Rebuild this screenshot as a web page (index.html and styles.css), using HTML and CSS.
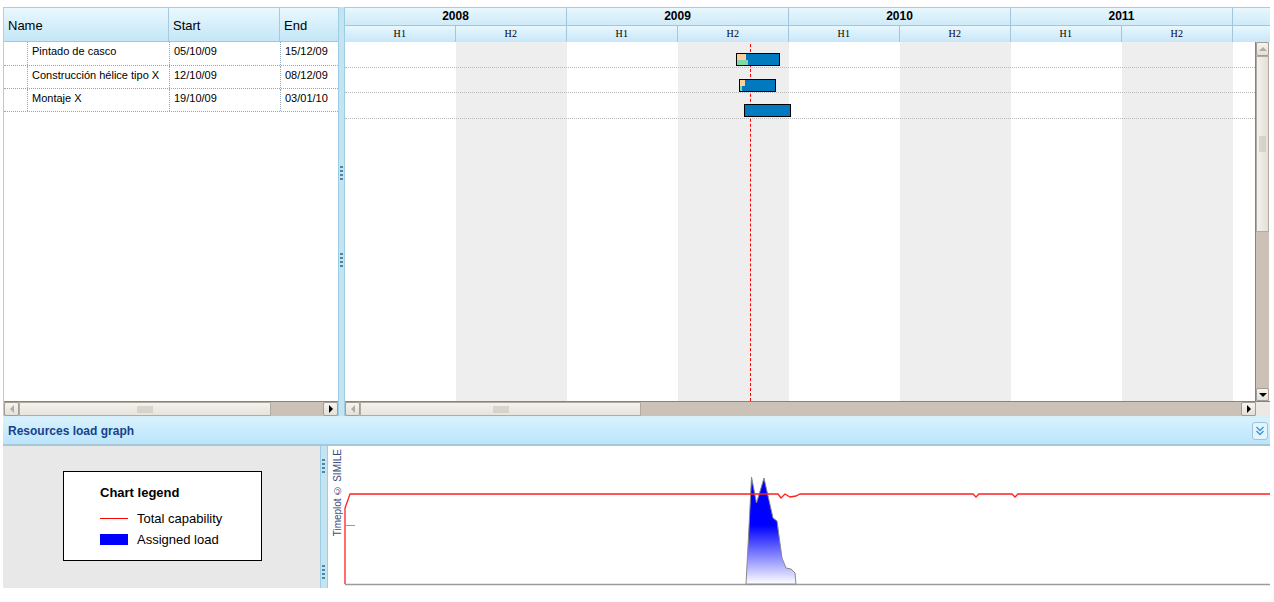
FILE: index.html
```html
<!DOCTYPE html>
<html>
<head>
<meta charset="utf-8">
<link rel="stylesheet" href="styles.css">
</head>
<body>
<div class="app">
  <div class="top">
    <div class="grid">
      <div class="grid-head">
        <div class="gh name">Name</div>
        <div class="gh start">Start</div>
        <div class="gh end">End</div>
      </div>
      <div class="grid-body">
        <div class="row first"><div class="ind"></div><div class="c name">Pintado de casco</div><div class="c start">05/10/09</div><div class="c end">15/12/09</div></div>
        <div class="row"><div class="ind"></div><div class="c name">Construcción hélice tipo X</div><div class="c start">12/10/09</div><div class="c end">08/12/09</div></div>
        <div class="row"><div class="ind"></div><div class="c name">Montaje X</div><div class="c start">19/10/09</div><div class="c end">03/01/10</div></div>
      </div>
      <div class="hscroll">
        <div class="sbtn left"><span class="tri-l dis"></span></div>
        <div class="thumb h" style="width:252px"><span class="grip-h"></span></div>
        <div class="track"></div>
        <div class="sbtn right"><span class="tri-r"></span></div>
      </div>
    </div>
    <div class="splitter v">
      <span class="grip g1"></span>
      <span class="grip g2"></span>
    </div>
    <div class="gantt">
      <div class="gantt-head">
        <div class="years">
          <div class="yr">2008</div><div class="yr">2009</div><div class="yr">2010</div><div class="yr">2011</div><div class="yr tail"></div>
        </div>
        <div class="halves">
          <div class="hf">H1</div><div class="hf">H2</div><div class="hf">H1</div><div class="hf">H2</div><div class="hf">H1</div><div class="hf">H2</div><div class="hf">H1</div><div class="hf">H2</div><div class="hf tail"></div>
        </div>
      </div>
      <div class="gantt-main">
        <div class="canvas">
          <div class="bands">
            <div class="band"></div><div class="band alt"></div><div class="band"></div><div class="band alt"></div><div class="band"></div><div class="band alt"></div><div class="band"></div><div class="band alt"></div><div class="band tail"></div>
          </div>
          <div class="lines">
            <div class="rline"></div><div class="rline"></div><div class="rline"></div>
          </div>
          <div class="today"></div>
          <div class="bar" style="left:391px;top:11px;width:44px">
            <span class="prog p1" style="width:9px"></span><span class="prog p2" style="width:11px"></span>
          </div>
          <div class="bar" style="left:394px;top:37px;width:37px">
            <span class="prog p1" style="width:5px"></span><span class="prog p2" style="width:2px"></span>
          </div>
          <div class="bar" style="left:399px;top:62px;width:47px"></div>
        </div>
        <div class="vscroll">
          <div class="sbtn up"><span class="tri-u dis"></span></div>
          <div class="thumb v" style="height:176px"><span class="grip-v"></span></div>
          <div class="track vt"></div>
          <div class="sbtn down"><span class="tri-d"></span></div>
        </div>
      </div>
      <div class="hscroll wide">
        <div class="sbtn left"><span class="tri-l dis"></span></div>
        <div class="thumb h" style="width:281px"><span class="grip-h"></span></div>
        <div class="track"></div>
        <div class="sbtn right"><span class="tri-r"></span></div>
        <div class="corner"></div>
      </div>
    </div>
  </div>

  <div class="res-head">
    <span class="res-title">Resources load graph</span>
    <div class="collapse">
      <svg width="10" height="12" viewBox="0 0 10 12"><path d="M1.5 2 L5 5.5 L8.5 2 M1.5 6 L5 9.5 L8.5 6" fill="none" stroke="#3d8fd8" stroke-width="1.3"/></svg>
    </div>
  </div>

  <div class="res-body">
    <div class="legend-pane">
      <div class="legend">
        <div class="lg-title">Chart legend</div>
        <div class="lg-item"><span class="sw-line"></span>Total capability</div>
        <div class="lg-item"><span class="sw-box"></span>Assigned load</div>
      </div>
    </div>
    <div class="splitter v2">
      <span class="grip g3"></span>
      <span class="grip g4"></span>
    </div>
    <div class="plot">
      <span class="credit">Timeplot © SIMILE</span>
      <svg class="chart" width="942" height="142" viewBox="0 0 942 142">
        <defs>
          <linearGradient id="load" x1="0" y1="0" x2="0" y2="1">
            <stop offset="0" stop-color="#0000ff"/>
            <stop offset="0.45" stop-color="#0000ff"/>
            <stop offset="1" stop-color="#ffffff"/>
          </linearGradient>
        </defs>
        <line x1="17" y1="138.5" x2="942" y2="138.5" stroke="#9a9a9a" stroke-width="1.5"/>
        <line x1="18" y1="79.5" x2="27" y2="79.5" stroke="#9a9a9a" stroke-width="1"/>
        <polygon points="418,138 421,81 423.5,31 428.5,57 436,32 445,72 449,75 454,112 458,122 463,123 467,127 468,138" fill="url(#load)" stroke="#8a8a8a" stroke-width="1"/>
        <polyline points="17,138 17,62 22,48 450,48 453,52 457,48 462,51 468,50 472,48 645,48 648,51 651,48 684,48 687,51 690,48 942,48" fill="none" stroke="#ff2020" stroke-width="1.3"/>
      </svg>
    </div>
  </div>
</div>
</body>
</html>
```

FILE: styles.css
```css
html, body { margin: 0; padding: 0; background: #fff; }
body { font-family: "Liberation Sans", Arial, sans-serif; color: #000; }

.app { padding: 7px 4px 0 3px; width: 1267px; }

.top { display: flex; height: 409px; }

/* ---------- left grid ---------- */
.grid { width: 335px; display: flex; flex-direction: column; border-left: 1px solid #a9d2e4; box-sizing: border-box; }
.grid-head { display: flex; height: 35px; flex: none; box-sizing: border-box; border-top: 1px solid #a9cde0; border-bottom: 1px solid #a3c6dc;
  background: linear-gradient(#e9f8fe, #c4e6f8); }
.gh { font-size: 13px; line-height: 35px; padding-left: 4px; box-sizing: border-box; border-right: 1px solid #a8c8dd; }
.name { width: 165px; }
.start { width: 111px; }
.end { flex: 1; }
.gh.end { border-right: none; }
.grid-body { flex: 1; background: #fff; }
.row { display: flex; height: 23px; border-bottom: 1px dotted #8fa6bb; box-sizing: border-box; }
.row.first { height: 24px; }
.row .ind { width: 23px; border-right: 1px dotted #8fa6bb; }
.row .c { font-size: 11px; line-height: 18px; padding-left: 4px; box-sizing: border-box; border-right: 1px dotted #8fa6bb; white-space: nowrap; overflow: hidden; }
.row .c.name { width: 142px; }
.row .c.end { border-right: none; }

/* ---------- scrollbars ---------- */
.hscroll { height: 15px; flex: none; display: flex; background: #cbc1b6; border-top: 1px solid #8b8175; box-sizing: border-box; }
.sbtn { width: 15px; flex: none; box-sizing: border-box; border: 1px solid #a59d92; border-radius: 2px; background: linear-gradient(#f6f4f1, #e4e0da); display: flex; align-items: center; justify-content: center; }
.thumb { flex: none; box-sizing: border-box; background: linear-gradient(#f4f2ee, #e7e3dd); border: 1px solid #b3aaa0; display: flex; align-items: center; justify-content: center; }
.thumb.v { background: linear-gradient(90deg, #f4f2ee, #e3dfd8); }
.track { flex: 1; background: #cbc1b6; }
.corner { width: 14px; background: #ece9e4; }
.grip-h { width: 16px; height: 7px; background-image: radial-gradient(#c4bdb3 45%, transparent 55%); background-size: 2px 2px; }
.grip-v { width: 7px; height: 16px; background-image: radial-gradient(#c4bdb3 45%, transparent 55%); background-size: 2px 2px; }
.tri-r { width: 0; height: 0; border-top: 4px solid transparent; border-bottom: 4px solid transparent; border-left: 4px solid #000; }
.tri-l { width: 0; height: 0; border-top: 4px solid transparent; border-bottom: 4px solid transparent; border-right: 4px solid #000; }
.tri-u { width: 0; height: 0; border-left: 4px solid transparent; border-right: 4px solid transparent; border-bottom: 4px solid #000; }
.tri-d { width: 0; height: 0; border-left: 4px solid transparent; border-right: 4px solid transparent; border-top: 4px solid #000; }
.tri-l.dis { border-right-color: #b2aca4; }
.tri-u.dis { border-bottom-color: #b2aca4; }

.vscroll { width: 14px; flex: none; display: flex; flex-direction: column; background: #cbc1b6; border-left: 1px solid #8b8175; box-sizing: border-box; }
.vscroll .sbtn { width: auto; height: 14px; }
.vscroll .sbtn.down { height: 13px; }

/* ---------- splitters ---------- */
.splitter { position: relative; background: #c4e4f1; border-left: 1px solid #9ccde2; border-right: 1px solid #9ccde2; box-sizing: border-box; }
.splitter.v { width: 7px; }
.splitter.v2 { width: 8px; }
.grip { position: absolute; left: 1px; width: 3px; height: 15px;
  background: repeating-linear-gradient(#4f86a8 0 2px, transparent 2px 4px); }
.g1 { top: 159px; }
.g2 { top: 246px; }
.g3 { top: 13px; }
.g4 { top: 119px; }

/* ---------- gantt ---------- */
.gantt { width: 925px; display: flex; flex-direction: column; }
.gantt-head { height: 35px; flex: none; box-sizing: border-box; border-top: 1px solid #a9cde0; border-bottom: 1px solid #a3c6dc; }
.years { display: flex; height: 17px; border-bottom: 1px solid #a3c6dc; background: linear-gradient(#e8f7fe, #cfeaf8); }
.yr { width: 222px; flex: none; box-sizing: border-box; border-right: 1px solid #a3c6dc; font-size: 12px; font-weight: bold; text-align: center; line-height: 17px; }
.yr.tail { width: 36px; border-right: none; }
.halves { display: flex; height: 16px; background: linear-gradient(#e8f7fe, #c7e7f9); }
.hf { width: 111px; flex: none; box-sizing: border-box; border-right: 1px solid #a3c6dc; font-family: "Liberation Serif", "Times New Roman", serif; font-size: 10px; text-align: center; line-height: 16px; letter-spacing: 0.5px; }
.hf.tail { width: 36px; border-right: none; }

.gantt-main { flex: 1; display: flex; min-height: 0; }
.canvas { position: relative; width: 910px; flex: none; overflow: hidden; }
.bands { display: flex; height: 100%; }
.band { width: 111px; flex: none; background: #fff; }
.band.alt { background: #eeeeee; }
.band.tail { width: 22px; }
.lines { position: absolute; left: 0; top: 0; width: 100%; }
.rline { height: 25px; border-bottom: 1px dotted #b8b8b8; box-sizing: border-box; }
.rline:nth-child(1) { height: 26px; }
.rline:nth-child(3) { height: 26px; }
.today { position: absolute; left: 405px; top: 2px; bottom: 0; width: 0; border-left: 1px dashed #ff0000; }
.bar { position: absolute; height: 13px; box-sizing: border-box; border: 1px solid #000; background: #0079bf; }
.prog { position: absolute; left: 0; display: block; }
.p1 { top: 0; height: 6px; background: #fdcf9c; }
.p2 { top: 6px; height: 5px; background: #7ed9a9; }

/* ---------- resources ---------- */
.res-head { height: 30px; display: flex; align-items: center; justify-content: space-between;
  border-top: 2px solid #d6eff9; border-bottom: 2px solid #a4c8d6; box-sizing: border-box;
  background: linear-gradient(#d8f2fd, #bbe5fb); padding: 0 2px 0 5px; }
.res-title { font-size: 12px; font-weight: bold; color: #15428b; }
.collapse { width: 16px; height: 18px; box-sizing: border-box; border: 1px solid #9cc4de; border-radius: 3px; background: #e4f4fd; display: flex; align-items: center; justify-content: center; }

.res-body { display: flex; height: 142px; }
.legend-pane { width: 317px; background: #e8e8e8; padding: 25px 0 0 60px; box-sizing: border-box; }
.legend { width: 199px; height: 90px; box-sizing: border-box; border: 1px solid #000; background: #fff; padding: 13px 0 0 36px; font-size: 13px; }
.lg-title { font-weight: bold; margin-bottom: 8px; }
.lg-item { display: flex; align-items: center; height: 21px; }
.sw-line { width: 28px; height: 1px; background: #ff0000; margin-right: 9px; }
.sw-box { width: 28px; height: 11px; background: #0000ff; margin-right: 9px; }

.plot { position: relative; flex: 1; background: #fff; }
.credit { position: absolute; left: 4px; top: 3px; writing-mode: vertical-rl; transform: rotate(180deg); font-size: 10px; color: #3b4a78; white-space: nowrap; }
.chart { display: block; }
```
